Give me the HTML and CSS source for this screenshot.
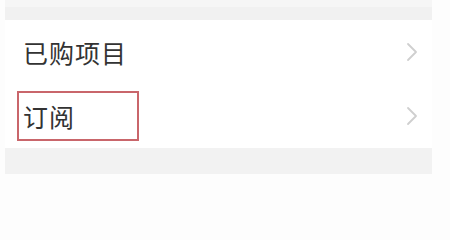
FILE: index.html
```html
<!DOCTYPE html>
<html lang="zh">
<head>
<meta charset="utf-8">
<link rel="stylesheet" href="styles.css">
</head>
<body>
<div class="page">
  <div class="gap top"></div>
  <ul class="list">
    <li class="row">
      <span class="label">已购项目</span>
      <svg class="chev" viewBox="0 0 12 20" width="12" height="20"><path d="M2 2 L10 10 L2 18" fill="none" stroke="#cfcfcf" stroke-width="1.8" stroke-linecap="round" stroke-linejoin="round"/></svg>
    </li>
    <li class="row">
      <span class="label">订阅</span>
      <svg class="chev" viewBox="0 0 12 20" width="12" height="20"><path d="M2 2 L10 10 L2 18" fill="none" stroke="#cfcfcf" stroke-width="1.8" stroke-linecap="round" stroke-linejoin="round"/></svg>
      <div class="highlight"></div>
    </li>
  </ul>
  <div class="gap bottom"></div>
</div>
</body>
</html>
```

FILE: styles.css
```css
html, body {
  margin: 0;
  padding: 0;
  background: #fdfdfd;
}
body {
  width: 450px;
  height: 203px;
  overflow: hidden;
  font-family: "Noto Sans CJK SC", "Noto Sans", sans-serif;
}
.page {
  margin-left: 5px;
  width: 427px;
  background: #ffffff;
}
.gap {
  background: #f2f2f2;
}
.gap.top {
  height: 20px;
  background: linear-gradient(#f6f6f6 0, #f6f6f6 7px, #f1f1f1 7px);
}
.gap.bottom {
  height: 26px;
}
.list {
  list-style: none;
  margin: 0;
  padding: 0;
}
.row {
  position: relative;
  height: 64px;
  display: flex;
  align-items: center;
  justify-content: space-between;
  padding: 0 14px 0 18px;
}
.label {
  font-size: 25px;
  color: #333333;
  letter-spacing: 1px;
}
.chev {
  display: block;
}
.highlight {
  position: absolute;
  left: 12px;
  top: 7px;
  width: 118px;
  height: 46px;
  border: 2px solid #c9666b;
}
```
